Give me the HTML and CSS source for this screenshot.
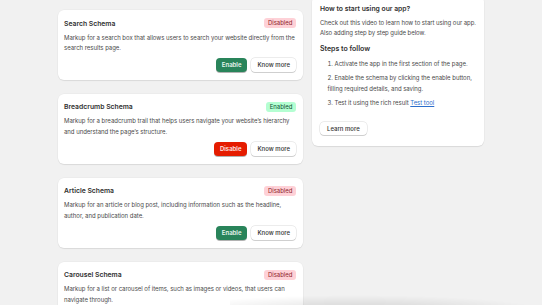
FILE: index.html
```html
<!DOCTYPE html>
<html lang="en">
<head>
  <meta charset="UTF-8" />
  <meta name="viewport" content="width=device-width, initial-scale=1" />
  <title>Schema settings</title>
  <link rel="stylesheet" href="styles.css">
</head>
<body>
  <div class="layout">
    <div class="schemas">
      <div class="card">
        <div class="card-head">
          <h2>Search Schema</h2>
          <span class="badge off">Disabled</span>
        </div>
        <p class="desc">Markup for a search box that allows users to search your website directly from the search results page.</p>
        <div class="actions">
          <button class="btn primary">Enable</button>
          <button class="btn">Know more</button>
        </div>
      </div>

      <div class="card">
        <div class="card-head">
          <h2>Breadcrumb Schema</h2>
          <span class="badge on">Enabled</span>
        </div>
        <p class="desc">Markup for a breadcrumb trail that helps users navigate your website’s hierarchy and understand the page’s structure.</p>
        <div class="actions">
          <button class="btn danger">Disable</button>
          <button class="btn">Know more</button>
        </div>
      </div>

      <div class="card">
        <div class="card-head">
          <h2>Article Schema</h2>
          <span class="badge off">Disabled</span>
        </div>
        <p class="desc">Markup for an article or blog post, including information such as the headline, author, and publication date.</p>
        <div class="actions">
          <button class="btn primary">Enable</button>
          <button class="btn">Know more</button>
        </div>
      </div>

      <div class="card">
        <div class="card-head">
          <h2>Carousel Schema</h2>
          <span class="badge off">Disabled</span>
        </div>
        <p class="desc">Markup for a list or carousel of items, such as images or videos, that users can navigate through.</p>
        <div class="actions">
          <button class="btn primary">Enable</button>
          <button class="btn">Know more</button>
        </div>
      </div>
    </div>

    <div class="side">
      <div class="card guide">
        <h3>How to start using our app?</h3>
        <p>Check out this video to learn how to start using our app. Also adding step by step guide below.</p>
        <h4>Steps to follow</h4>
        <ol>
          <li>Activate the app in the first section of the page.</li>
          <li>Enable the schema by clicking the enable button, filling required details, and saving.</li>
          <li>Test it using the rich result <a href="#">Test tool</a></li>
        </ol>
        <button class="btn">Learn more</button>
      </div>
    </div>
  </div>
  <div class="fade"></div>
</body>
</html>
```

FILE: styles.css
```css
body {
  margin: 0;
  background-color: #f1f1f1;
  color: #303030;
  font-family: Inter, 'Noto Sans', sans-serif;
  overflow: hidden;
}
.layout {
  display: flex;
  align-items: flex-start;
  gap: 9px;
  padding: 10px 0 0 58px;
}
.schemas {
  width: 245px;
  display: flex;
  flex-direction: column;
  gap: 14px;
}
.card {
  background-color: #fff;
  border-radius: 6px;
  box-shadow: 0 1px 1px rgba(0,0,0,0.08), 0 0 0 0.5px rgba(0,0,0,0.04);
  padding: 7px 7px 8px 6px;
}
.card-head {
  display: flex;
  justify-content: space-between;
  align-items: center;
  height: 10px;
  margin-top: 1px;
}
h2 {
  margin: 0;
  font-size: 6.8px;
  font-weight: 600;
}
.badge {
  font-size: 6px;
  line-height: 10px;
  padding: 0 3.5px;
  border-radius: 3px;
}
.badge.off {
  background-color: #fed1d7;
  color: #8e1f2b;
}
.badge.on {
  background-color: #b4fed2;
  color: #0c5132;
}
.desc {
  margin: 4.5px 0 0;
  font-size: 6px;
  letter-spacing: -0.03px;
  line-height: 10.7px;
  color: #4a4a4a;
}
.actions {
  display: flex;
  justify-content: flex-end;
  gap: 4px;
  margin-top: 4px;
}
.btn {
  font-family: inherit;
  font-size: 6px;
  font-weight: 500;
  height: 14px;
  padding: 0 6px;
  border-radius: 4px;
  border: none;
  background-color: #fff;
  color: #303030;
  box-shadow: 0 0 0 0.5px rgba(0,0,0,0.15), 0 1px 0 rgba(0,0,0,0.12);
  cursor: pointer;
}
.btn.primary {
  background-color: #29845a;
  color: #e8f5ee;
  font-weight: 600;
  box-shadow: 0 1px 0 rgba(0,0,0,0.3);
}
.btn.danger {
  background-color: #e51c00;
  color: #fde7e3;
  font-weight: 600;
  box-shadow: 0 1px 0 rgba(0,0,0,0.3);
}
.side {
  width: 172px;
  margin-top: -14.5px;
}
.guide {
  padding: 8px 5px 11px 8px;
}
.guide h3 {
  margin: 0;
  font-size: 6.8px;
  font-weight: 600;
  line-height: 10px;
}
.guide p {
  margin: 4px 0 0;
  font-size: 6px;
  letter-spacing: -0.05px;
  line-height: 10.5px;
  color: #4a4a4a;
}
.guide h4 {
  margin: 4px 0 0;
  font-size: 7px;
  font-weight: 600;
  line-height: 11px;
}
ol {
  margin: 4px 0 0;
  padding-left: 7.5px;
  list-style: decimal inside;
  font-size: 6px;
  letter-spacing: -0.03px;
  line-height: 11px;
  color: #4a4a4a;
}
li {
  margin-bottom: 3px;
}
a {
  color: #2c6ecb;
}
.guide .btn {
  margin-top: 11px;
  height: 13px;
  padding: 0 7px;
}
.fade {
  position: fixed;
  left: 230px;
  right: 0;
  bottom: -20px;
  height: 30px;
  background: radial-gradient(ellipse at 40% 50%, rgba(0,0,0,0.12), rgba(0,0,0,0) 70%);
  pointer-events: none;
}
```
